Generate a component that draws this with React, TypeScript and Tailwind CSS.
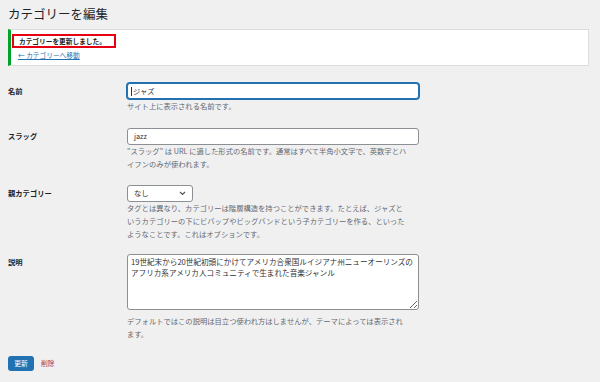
import React from "react";

const jp = { fontFamily: '"Noto Sans CJK JP", "Noto Sans", sans-serif' };

function Row({ label, children }: { label: string; children: React.ReactNode }) {
  return (
    <div className="flex">
      <div className="w-[119px] shrink-0 pt-[2px] text-[7.3px] leading-[13px] font-bold text-[#1d2327]">
        {label}
      </div>
      <div className="w-[292px]">{children}</div>
    </div>
  );
}

function Help({ children, className = "" }: { children: React.ReactNode; className?: string }) {
  return (
    <p className={"text-[7.3px] leading-[13px] text-[#646970] whitespace-nowrap " + className}>
      {children}
    </p>
  );
}

export default function App() {
  return (
    <div className="w-[600px] h-[382px] bg-[#f0f0f1] px-[8px] pt-[5px] overflow-hidden" style={jp}>
      <h1 className="text-[12.5px] leading-[18px] text-[#1d2327] font-normal">カテゴリーを編集</h1>

      {/* notice */}
      <div className="mt-[6px] w-[581px] h-[37px] bg-white border border-[#dcdcde] border-l-[3px] border-l-[#00a32a] pl-[1px] pt-[4px]">
        <div className="w-[104px] h-[14px] border-2 border-[#e60012] flex items-center pl-[5px]">
          <span className="text-[6.7px] leading-[10px] font-bold text-[#1d2327] whitespace-nowrap">
            カテゴリーを更新しました。
          </span>
        </div>
        <a className="block ml-[6px] mt-[2px] text-[6.7px] leading-[10px] text-[#2271b1] underline whitespace-nowrap">
          ← カテゴリーへ移動
        </a>
      </div>

      <div className="mt-[17px]">
        <Row label="名前">
          <div className="h-[16px] w-[292px] rounded-[3px] border border-[#2271b1] shadow-[0_0_0_1px_#2271b1] bg-white flex items-center pl-[3px] text-[7.3px] text-[#2c3338]">
            <span className="w-px h-[9px] bg-[#2c3338] mr-[1px]" />
            ジャズ
          </div>
          <Help className="mt-px">サイト上に表示される名前です。</Help>
        </Row>

        <div className="mt-[15px]">
          <Row label="スラッグ">
            <div className="h-[17px] w-[292px] rounded-[3px] border border-[#8c8f94] bg-white flex items-center pl-[6px] text-[7.3px] text-[#2c3338]">
              jazz
            </div>
            <Help>
              "スラッグ" は URL に適した形式の名前です。通常はすべて半角小文字で、英数字とハ
              <br />
              イフンのみが使われます。
            </Help>
          </Row>
        </div>

        <div className="mt-[14px]">
          <Row label="親カテゴリー">
            <div className="h-[17px] w-[66px] rounded-[3px] border border-[#8c8f94] bg-white flex items-center justify-between pl-[6px] pr-[6px] text-[7.3px] text-[#2c3338]">
              <span>なし</span>
              <svg width="7" height="5" viewBox="0 0 7 5" fill="none">
                <path d="M1 1l2.5 2.5L6 1" stroke="#50575e" strokeWidth="1.2" />
              </svg>
            </div>
            <Help>
              タグとは異なり、カテゴリーは階層構造を持つことができます。たとえば、ジャズと
              <br />
              いうカテゴリーの下にビバップやビッグバンドという子カテゴリーを作る、といった
              <br />
              ようなことです。これはオプションです。
            </Help>
          </Row>
        </div>

        <div className="mt-[13px]">
          <Row label="説明">
            <textarea
              readOnly
              className="block h-[56px] w-[292px] rounded-[3px] border border-[#8c8f94] bg-white px-[3px] py-[1px] text-[7.6px] leading-[11px] text-[#2c3338] resize-y"
              style={jp}
              defaultValue="19世紀末から20世紀初頭にかけてアメリカ合衆国ルイジアナ州ニューオーリンズのアフリカ系アメリカ人コミュニティで生まれた音楽ジャンル"
            />
            <Help className="mt-[5px]">
              デフォルトではこの説明は目立つ使われ方はしませんが、テーマによっては表示され
              <br />
              ます。
            </Help>
          </Row>
        </div>

        <div className="mt-[15px] flex items-center gap-[7px]">
          <button className="h-[15px] w-[26px] rounded-[3px] bg-[#2271b1] text-white text-[6.8px] leading-[15px]">
            更新
          </button>
          <a className="text-[6.8px] text-[#b32d2e]">削除</a>
        </div>
      </div>
    </div>
  );
}
